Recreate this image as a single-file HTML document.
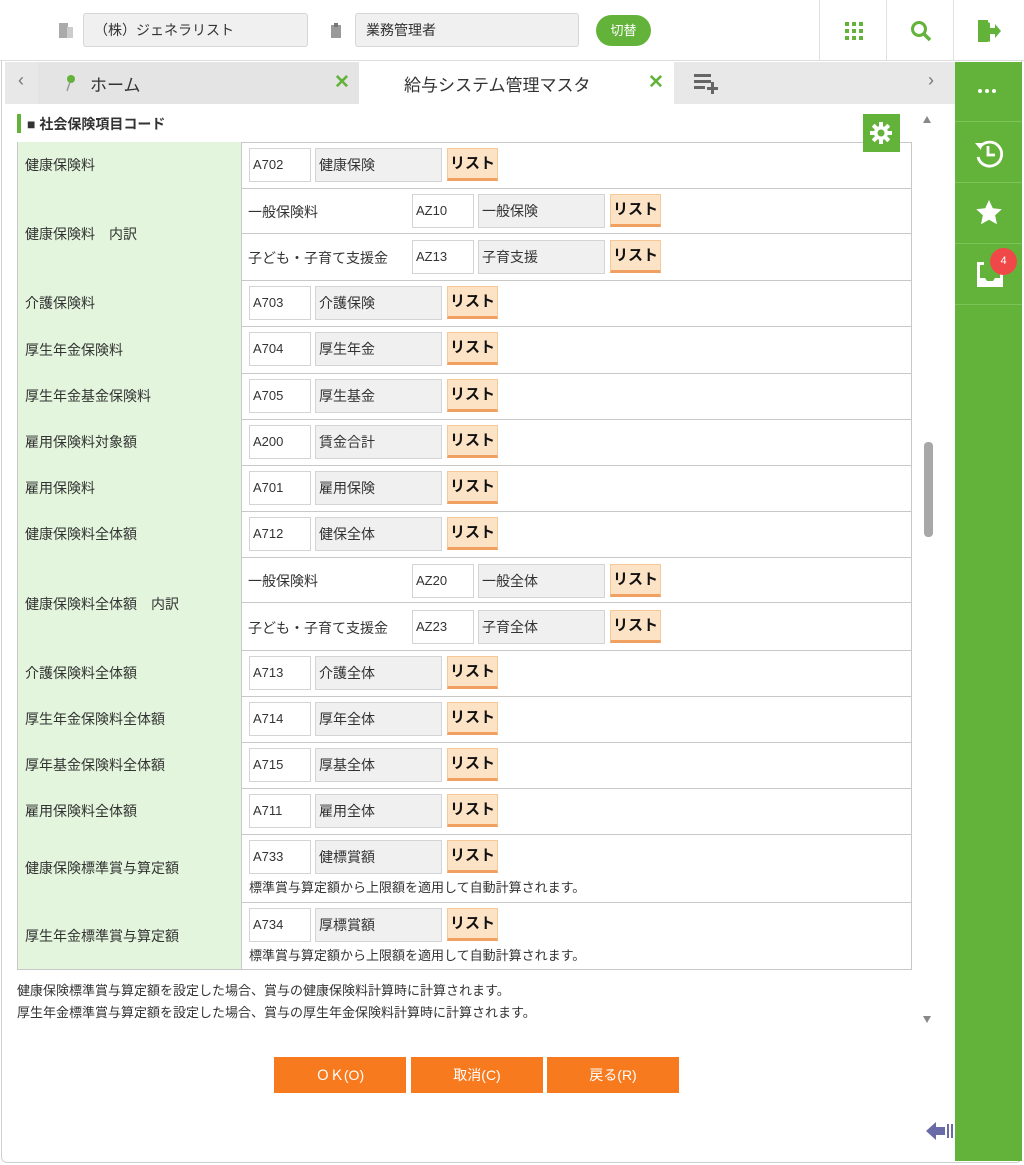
<!DOCTYPE html>
<html><head><meta charset="utf-8"><style>
*{box-sizing:border-box;margin:0;padding:0}
body{width:1024px;height:1165px;background:#fff;font-family:"Liberation Sans","Noto Sans CJK JP",sans-serif;color:#333;position:relative;overflow:hidden;font-size:14px}
.a{position:absolute}
.frame{left:1px;top:1px;width:1021px;height:1162px;border:1px solid #d0d0d0;border-radius:6px}
.tb{left:0;top:0;width:1024px;height:61px;border-bottom:1px solid #ddd;background:#fff}
.sel{height:34px;top:13px;background:#f0f0f0;border:1px solid #d6d6d6;border-radius:3px;font-size:14px;line-height:32px;padding-left:10px;color:#333}
.vs{top:0;width:1px;height:60px;background:#e0e0e0}
.tabbar{left:5px;top:62px;width:950px;height:42px;background:#e8e8e8}
.row{position:absolute;left:17px;width:895px;border-bottom:1px solid #c8c8c8;border-left:1px solid #c8c8c8;border-right:1px solid #c8c8c8}
.lab{position:absolute;left:0;top:0;bottom:0;width:224px;background:#e3f5dc;border-right:1px solid #c8c8c8;font-size:14px;padding-left:7px;display:flex;align-items:center}
.cd{position:absolute;width:62px;height:34px;border:1px solid #d4d4d4;background:#fff;font-size:13px;line-height:32px;padding-left:3px}
.nm{position:absolute;width:127px;height:34px;border:1px solid #d4d4d4;background:#f0f0f0;font-size:14px;line-height:32px;padding-left:3px}
.ls{position:absolute;width:51px;height:33px;background:#fde3c6;border:1px solid #f5c89a;border-bottom:3px solid #f0a060;font-weight:bold;font-size:15px;line-height:29px;text-align:center;color:#111}
.st{position:absolute;font-size:14px}
.note{position:absolute;left:231px;font-size:13px}
.sub{position:absolute;left:224px;right:0;border-bottom:1px solid #c8c8c8}
.btn{position:absolute;top:1057px;width:132px;height:36px;background:#f77a1e;color:#fff;text-align:center;line-height:36px;font-size:14px}
.side{left:955px;top:62px;width:67px;height:1099px;background:#63b33b}
.sb{position:absolute;left:0;width:67px;height:60px;border-bottom:1px solid #7cc35a}
</style></head><body>
<div class="a frame"></div>
<div class="a tb">
 <svg class="a" style="left:58px;top:22px" width="16" height="17"><rect x="1" y="1" width="9" height="15" fill="#aaa"/><rect x="9" y="5" width="6" height="11" fill="#ccc"/></svg>
 <div class="a sel" style="left:83px;width:225px">（株）ジェネラリスト</div>
 <svg class="a" style="left:330px;top:22px" width="12" height="17"><rect x="1" y="3" width="10" height="13" fill="#999"/><rect x="4" y="1" width="4" height="4" fill="#777"/></svg>
 <div class="a sel" style="left:355px;width:224px">業務管理者</div>
 <div class="a" style="left:596px;top:15px;width:55px;height:31px;border-radius:16px;background:#63b33b;color:#fff;text-align:center;line-height:31px;font-size:13px">切替</div>
 <div class="a vs" style="left:819px"></div><div class="a vs" style="left:886px"></div><div class="a vs" style="left:953px"></div>
 <svg class="a" style="left:845px;top:22px" width="18" height="18" fill="#63b33b"><rect x="0" y="0" width="4" height="4"/><rect x="7" y="0" width="4" height="4"/><rect x="14" y="0" width="4" height="4"/><rect x="0" y="7" width="4" height="4"/><rect x="7" y="7" width="4" height="4"/><rect x="14" y="7" width="4" height="4"/><rect x="0" y="14" width="4" height="4"/><rect x="7" y="14" width="4" height="4"/><rect x="14" y="14" width="4" height="4"/></svg>
 <svg class="a" style="left:910px;top:20px" width="22" height="22"><circle cx="9" cy="9" r="6.5" stroke="#63b33b" stroke-width="3" fill="none"/><line x1="13.5" y1="13.5" x2="20" y2="20" stroke="#63b33b" stroke-width="3.5"/></svg>
 <svg class="a" style="left:977px;top:19px" width="24" height="24" fill="#63b33b"><path d="M1 1h10v4H5v14h6v4H1z"/><path d="M5 1l8 3v19l-8-3z"/><path d="M13 9h5V5l6 7-6 7v-4h-5z"/></svg>
</div>
<div class="a tabbar"></div>
<div class="a" style="left:18px;top:70px;font-size:18px;color:#777">‹</div>
<div class="a" style="left:38px;top:62px;width:321px;height:42px;background:#e4e4e4"></div>
<svg class="a" style="left:64px;top:74px" width="12" height="18"><circle cx="7" cy="5" r="4" fill="#63b33b"/><line x1="6" y1="8" x2="3" y2="17" stroke="#999" stroke-width="1.5"/></svg>
<div class="a" style="left:90px;top:71px;font-size:17px;color:#333">ホーム</div>
<div class="a" style="left:334px;top:71px;font-size:19px;font-weight:bold;color:#63b33b">✕</div>
<div class="a" style="left:359px;top:62px;width:315px;height:42px;background:#fff"></div>
<div class="a" style="left:404px;top:71px;font-size:17px;color:#333">給与システム管理マスタ</div>
<div class="a" style="left:648px;top:71px;font-size:19px;font-weight:bold;color:#63b33b">✕</div>
<svg class="a" style="left:694px;top:73px" width="26" height="22" fill="#666"><rect x="0" y="1" width="17" height="3"/><rect x="0" y="7" width="17" height="3"/><rect x="0" y="13" width="11" height="3"/><rect x="13" y="14" width="11" height="3"/><rect x="17" y="9" width="3" height="12"/></svg>
<div class="a" style="left:928px;top:70px;font-size:18px;color:#777">›</div>

<div class="a" style="left:17px;top:114px;width:4px;height:19px;background:#63b33b"></div>
<div class="a" style="left:27px;top:114px;font-size:14px;font-weight:bold;color:#333">■ 社会保険項目コード</div>

<div class="a" style="left:17px;top:142px;width:895px;height:1px;background:#c8c8c8"></div>

<div class="row" style="top:142px;height:47px"><div class="lab">健康保険料</div><div class="cd" style="left:231px;top:6px">A702</div><div class="nm" style="left:297px;top:6px">健康保険</div><div class="ls" style="left:429px;top:6px">リスト</div></div>
<div class="row" style="top:188px;height:93px"><div class="lab">健康保険料　内訳</div>
 <div class="sub" style="top:0;height:46px"><div class="st" style="left:6px;top:14px">一般保険料</div><div class="cd" style="left:170px;top:6px">AZ10</div><div class="nm" style="left:236px;top:6px">一般保険</div><div class="ls" style="left:368px;top:6px">リスト</div></div>
 <div class="sub" style="top:46px;height:46px;border:none"><div class="st" style="left:6px;top:14px">子ども・子育て支援金</div><div class="cd" style="left:170px;top:6px">AZ13</div><div class="nm" style="left:236px;top:6px">子育支援</div><div class="ls" style="left:368px;top:6px">リスト</div></div></div>
<div class="row" style="top:280px;height:47px"><div class="lab">介護保険料</div><div class="cd" style="left:231px;top:6px">A703</div><div class="nm" style="left:297px;top:6px">介護保険</div><div class="ls" style="left:429px;top:6px">リスト</div></div>
<div class="row" style="top:326px;height:48px"><div class="lab">厚生年金保険料</div><div class="cd" style="left:231px;top:6px">A704</div><div class="nm" style="left:297px;top:6px">厚生年金</div><div class="ls" style="left:429px;top:6px">リスト</div></div>
<div class="row" style="top:373px;height:47px"><div class="lab">厚生年金基金保険料</div><div class="cd" style="left:231px;top:6px">A705</div><div class="nm" style="left:297px;top:6px">厚生基金</div><div class="ls" style="left:429px;top:6px">リスト</div></div>
<div class="row" style="top:419px;height:47px"><div class="lab">雇用保険料対象額</div><div class="cd" style="left:231px;top:6px">A200</div><div class="nm" style="left:297px;top:6px">賃金合計</div><div class="ls" style="left:429px;top:6px">リスト</div></div>
<div class="row" style="top:465px;height:47px"><div class="lab">雇用保険料</div><div class="cd" style="left:231px;top:6px">A701</div><div class="nm" style="left:297px;top:6px">雇用保険</div><div class="ls" style="left:429px;top:6px">リスト</div></div>
<div class="row" style="top:511px;height:47px"><div class="lab">健康保険料全体額</div><div class="cd" style="left:231px;top:6px">A712</div><div class="nm" style="left:297px;top:6px">健保全体</div><div class="ls" style="left:429px;top:6px">リスト</div></div>
<div class="row" style="top:557px;height:94px"><div class="lab">健康保険料全体額　内訳</div>
 <div class="sub" style="top:0;height:46px"><div class="st" style="left:6px;top:14px">一般保険料</div><div class="cd" style="left:170px;top:7px">AZ20</div><div class="nm" style="left:236px;top:7px">一般全体</div><div class="ls" style="left:368px;top:7px">リスト</div></div>
 <div class="sub" style="top:46px;height:47px;border:none"><div class="st" style="left:6px;top:15px">子ども・子育て支援金</div><div class="cd" style="left:170px;top:7px">AZ23</div><div class="nm" style="left:236px;top:7px">子育全体</div><div class="ls" style="left:368px;top:7px">リスト</div></div></div>
<div class="row" style="top:650px;height:47px"><div class="lab">介護保険料全体額</div><div class="cd" style="left:231px;top:6px">A713</div><div class="nm" style="left:297px;top:6px">介護全体</div><div class="ls" style="left:429px;top:6px">リスト</div></div>
<div class="row" style="top:696px;height:47px"><div class="lab">厚生年金保険料全体額</div><div class="cd" style="left:231px;top:6px">A714</div><div class="nm" style="left:297px;top:6px">厚年全体</div><div class="ls" style="left:429px;top:6px">リスト</div></div>
<div class="row" style="top:742px;height:47px"><div class="lab">厚年基金保険料全体額</div><div class="cd" style="left:231px;top:6px">A715</div><div class="nm" style="left:297px;top:6px">厚基全体</div><div class="ls" style="left:429px;top:6px">リスト</div></div>
<div class="row" style="top:788px;height:47px"><div class="lab">雇用保険料全体額</div><div class="cd" style="left:231px;top:6px">A711</div><div class="nm" style="left:297px;top:6px">雇用全体</div><div class="ls" style="left:429px;top:6px">リスト</div></div>
<div class="row" style="top:834px;height:69px"><div class="lab">健康保険標準賞与算定額</div><div class="cd" style="left:231px;top:6px">A733</div><div class="nm" style="left:297px;top:6px">健標賞額</div><div class="ls" style="left:429px;top:6px">リスト</div><div class="note" style="top:43px">標準賞与算定額から上限額を適用して自動計算されます。</div></div>
<div class="row" style="top:902px;height:68px"><div class="lab">厚生年金標準賞与算定額</div><div class="cd" style="left:231px;top:6px">A734</div><div class="nm" style="left:297px;top:6px">厚標賞額</div><div class="ls" style="left:429px;top:6px">リスト</div><div class="note" style="top:43px">標準賞与算定額から上限額を適用して自動計算されます。</div></div>
<div class="a" style="left:17px;top:980px;font-size:13px">健康保険標準賞与算定額を設定した場合、賞与の健康保険料計算時に計算されます。</div>
<div class="a" style="left:17px;top:1002px;font-size:13px">厚生年金標準賞与算定額を設定した場合、賞与の厚生年金保険料計算時に計算されます。</div>

<div class="a" style="left:863px;top:114px;width:37px;height:38px;background:#63b33b"></div>
<svg class="a" style="left:869px;top:121px" width="24" height="24"><g fill="#fff"><circle cx="12" cy="12" r="7"/><rect x="10" y="1" width="4" height="22"/><rect x="1" y="10" width="22" height="4"/><rect x="10" y="1" width="4" height="22" transform="rotate(45 12 12)"/><rect x="10" y="1" width="4" height="22" transform="rotate(-45 12 12)"/></g><circle cx="12" cy="12" r="3.5" fill="#63b33b"/></svg>

<div class="a" style="left:923px;top:116px;width:0;height:0;border-left:4px solid transparent;border-right:4px solid transparent;border-bottom:7px solid #888"></div>
<div class="a" style="left:923px;top:1016px;width:0;height:0;border-left:4px solid transparent;border-right:4px solid transparent;border-top:7px solid #888"></div>
<div class="a" style="left:924px;top:442px;width:9px;height:95px;border-radius:4px;background:#a8a8a8"></div>

<div class="btn" style="left:274px">ＯＫ(O)</div>
<div class="btn" style="left:411px">取消(C)</div>
<div class="btn" style="left:547px">戻る(R)</div>
<svg class="a" style="left:926px;top:1120px" width="29" height="22"><path d="M0 11L10 2v5h9v8h-9v5z" fill="#6a6aa8"/><rect x="21" y="4" width="2" height="14" fill="#6a6aa8"/><rect x="25" y="4" width="2" height="14" fill="#6a6aa8"/></svg>

<div class="a side">
 <div class="sb" style="top:0">
  <div class="a" style="left:23px;top:27px;width:4px;height:4px;border-radius:2px;background:#fff;box-shadow:7px 0 #fff,14px 0 #fff"></div></div>
 <div class="sb" style="top:61px"><svg class="a" style="left:19px;top:15px" width="30" height="30"><path d="M6 9A12 12 0 1 1 4 19" stroke="#fff" stroke-width="2.8" fill="none"/><path d="M1 5l7 0-1 7z" fill="#fff"/><path d="M14 8v9h7" stroke="#fff" stroke-width="2.8" fill="none"/></svg></div>
 <div class="sb" style="top:122px"><svg class="a" style="left:20px;top:15px" width="28" height="28"><path d="M14 1l3.8 8.3 9 .9-6.7 6.1 1.9 8.9L14 20.7 6 25.2l1.9-8.9L1.2 10.2l9-.9z" fill="#fff"/></svg></div>
 <div class="sb" style="top:183px"><svg class="a" style="left:20px;top:13px" width="30" height="30"><path d="M2 4h7v3H5v13h5l2 3h6l2-3h5V7h-4V4h7v25H2z" fill="#fff"/></svg>
  <div class="a" style="left:35px;top:3px;width:27px;height:27px;border-radius:14px;background:#f04848;color:#fff;font-size:11px;text-align:center;line-height:27px">4</div></div>
</div>
</body></html>
